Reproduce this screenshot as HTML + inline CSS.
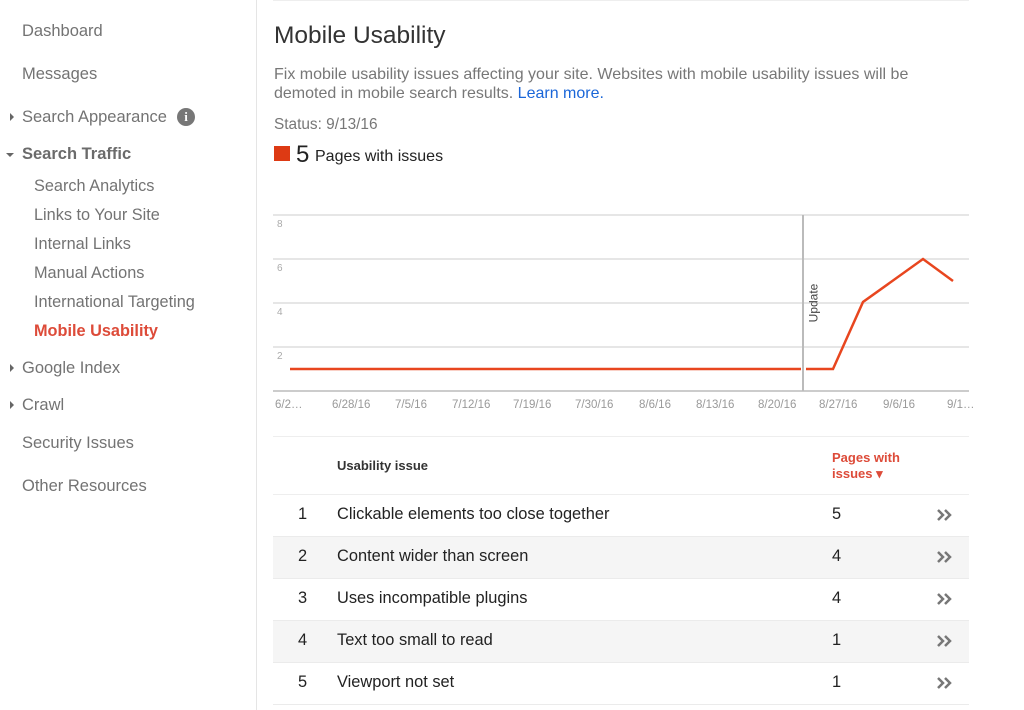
<!DOCTYPE html>
<html><head><meta charset="utf-8"><style>
body{margin:0;width:1024px;height:710px;background:#fff;font-family:"Liberation Sans",sans-serif;position:relative;overflow:hidden}
.a{position:absolute;white-space:nowrap}
.s{font-size:16.5px;color:#737373}
.ss{font-size:16.3px;color:#737373}
.tri{position:absolute;width:0;height:0}
.g{position:absolute;left:273px;width:696px;height:2px;background:#e6e6e6}
.row{position:absolute;left:273px;width:696px;height:41px;border-bottom:1px solid #ebebeb}
.row span{position:absolute;top:10px;font-size:16.4px;color:#222}
.ch{position:absolute;left:663px;top:13px}
.x span{position:absolute;white-space:nowrap}
</style></head><body>
<div style="position:absolute;left:256px;top:0;width:1px;height:710px;background:#e5e5e5"></div>
<div class="a s" style="left:22px;top:22px">Dashboard</div>
<div class="a s" style="left:22px;top:65px">Messages</div>
<div class="tri" style="left:10px;top:113px;border-left:4px solid #666;border-top:4px solid transparent;border-bottom:4px solid transparent"></div>
<div class="a s" style="left:22px;top:108px">Search Appearance</div>
<div class="a" style="left:177px;top:108px;width:18px;height:18px;border-radius:50%;background:#777;color:#fff;font:bold 13px 'Liberation Serif',serif;text-align:center;line-height:18px">i</div>
<div class="tri" style="left:6px;top:153px;border-top:4px solid #666;border-left:4px solid transparent;border-right:4px solid transparent"></div>
<div class="a s" style="left:22px;top:145px;font-weight:bold;color:#6b6b6b">Search Traffic</div>
<div class="a ss" style="left:34px;top:177px">Search Analytics</div>
<div class="a ss" style="left:34px;top:206px">Links to Your Site</div>
<div class="a ss" style="left:34px;top:235px">Internal Links</div>
<div class="a ss" style="left:34px;top:264px">Manual Actions</div>
<div class="a ss" style="left:34px;top:293px">International Targeting</div>
<div class="a ss" style="left:34px;top:322px;color:#dd4b39;font-weight:bold">Mobile Usability</div>
<div class="tri" style="left:10px;top:364px;border-left:4px solid #666;border-top:4px solid transparent;border-bottom:4px solid transparent"></div>
<div class="a s" style="left:22px;top:359px">Google Index</div>
<div class="tri" style="left:10px;top:401px;border-left:4px solid #666;border-top:4px solid transparent;border-bottom:4px solid transparent"></div>
<div class="a s" style="left:22px;top:396px">Crawl</div>
<div class="a s" style="left:22px;top:434px">Security Issues</div>
<div class="a s" style="left:22px;top:477px">Other Resources</div>

<div style="position:absolute;left:273px;top:0;width:696px;height:1px;background:#eee"></div>
<div class="a" style="left:274px;top:22px;font-size:24.5px;color:#333">Mobile Usability</div>
<div class="a" style="left:274px;top:65px;font-size:16px;color:#777;line-height:19px">Fix mobile usability issues affecting your site. Websites with mobile usability issues will be<br>demoted in mobile search results. <span style="color:#1a66d8">Learn more.</span></div>
<div class="a" style="left:274px;top:116px;font-size:15.4px;color:#777">Status: 9/13/16</div>
<div class="a" style="left:274px;top:146px;width:16px;height:15px;background:#dd3a14"></div>
<div class="a" style="left:296px;top:141px;font-size:24px;color:#222">5</div>
<div class="a" style="left:315px;top:148px;font-size:16px;color:#222">Pages with issues</div>

<div class="g" style="top:214px"></div><div class="g" style="top:258px"></div><div class="g" style="top:302px"></div><div class="g" style="top:346px"></div>
<div class="g" style="top:390px;background:#ccc"></div>
<div class="a" style="left:277px;top:219px;font-size:10px;color:#aaa">8</div>
<div class="a" style="left:277px;top:263px;font-size:10px;color:#aaa">6</div>
<div class="a" style="left:277px;top:307px;font-size:10px;color:#aaa">4</div>
<div class="a" style="left:277px;top:351px;font-size:10px;color:#aaa">2</div>
<div class="a" style="left:802px;top:215px;width:2px;height:176px;background:#bbb"></div>
<div class="a" style="left:794px;top:296px;font-size:12px;color:#444;transform:rotate(-90deg);transform-origin:center">Update</div>
<svg class="a" style="left:0;top:0" width="1024" height="710"><polyline points="290,369 801,369" fill="none" stroke="#e8461f" stroke-width="2.5"/><polyline points="806,369 833,369 863,302 923,259 953,281" fill="none" stroke="#e8461f" stroke-width="2.5"/></svg>
<div class="x" style="position:absolute;left:0;top:399px;width:1024px;font-size:11.5px;color:#999">
<span style="left:275px">6/2…</span><span style="left:332px">6/28/16</span><span style="left:395px">7/5/16</span><span style="left:452px">7/12/16</span><span style="left:513px">7/19/16</span><span style="left:575px">7/30/16</span><span style="left:639px">8/6/16</span><span style="left:696px">8/13/16</span><span style="left:758px">8/20/16</span><span style="left:819px">8/27/16</span><span style="left:883px">9/6/16</span><span style="left:947px">9/1…</span></div>

<div class="g" style="top:436px;height:1px;background:#eee"></div>
<div class="a" style="left:337px;top:458px;font-size:13px;font-weight:bold;color:#333">Usability issue</div>
<div class="a" style="left:832px;top:450px;font-size:13px;font-weight:bold;color:#dd4b39;line-height:16px">Pages with<br>issues ▾</div>
<div class="g" style="top:494px;height:1px;background:#eee"></div>
<div class="row" style="top:495px"><span style="left:25px">1</span><span style="left:64px">Clickable elements too close together</span><span style="left:559px">5</span><svg class="ch" width="18" height="14"><path d="M2 2l5 5-5 5M9 2l5 5-5 5" fill="none" stroke="#777" stroke-width="2.5"/></svg></div>
<div class="row" style="top:537px;background:#f5f5f5"><span style="left:25px">2</span><span style="left:64px">Content wider than screen</span><span style="left:559px">4</span><svg class="ch" width="18" height="14"><path d="M2 2l5 5-5 5M9 2l5 5-5 5" fill="none" stroke="#777" stroke-width="2.5"/></svg></div>
<div class="row" style="top:579px"><span style="left:25px">3</span><span style="left:64px">Uses incompatible plugins</span><span style="left:559px">4</span><svg class="ch" width="18" height="14"><path d="M2 2l5 5-5 5M9 2l5 5-5 5" fill="none" stroke="#777" stroke-width="2.5"/></svg></div>
<div class="row" style="top:621px;background:#f5f5f5"><span style="left:25px">4</span><span style="left:64px">Text too small to read</span><span style="left:559px">1</span><svg class="ch" width="18" height="14"><path d="M2 2l5 5-5 5M9 2l5 5-5 5" fill="none" stroke="#777" stroke-width="2.5"/></svg></div>
<div class="row" style="top:663px"><span style="left:25px">5</span><span style="left:64px">Viewport not set</span><span style="left:559px">1</span><svg class="ch" width="18" height="14"><path d="M2 2l5 5-5 5M9 2l5 5-5 5" fill="none" stroke="#777" stroke-width="2.5"/></svg></div>
</body></html>
